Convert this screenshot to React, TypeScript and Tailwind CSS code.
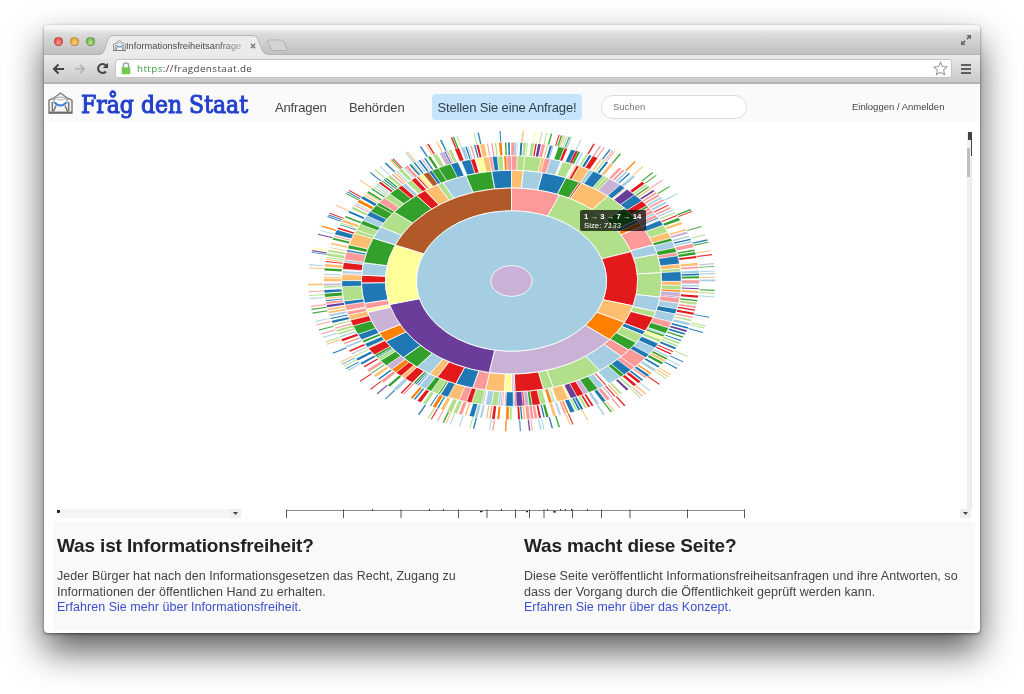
import React from "react";

const COLORS: Record<string, string> = {
  a: "#a6cee3",
  B: "#1f78b4",
  g: "#b2df8a",
  G: "#33a02c",
  p: "#fb9a99",
  R: "#e31a1c",
  o: "#fdbf6f",
  O: "#ff7f00",
  l: "#cab2d6",
  V: "#6a3d9a",
  y: "#ffff99",
  n: "#b15928",
  w: "#ffffff",
};

// Ring radii; the drawing is squashed vertically by SQUASH.
const RADII = [61, 285, 378, 450, 509, 563, 611];
const SQUASH = 0.738;

// Full rings: "colour end-angle", clockwise from the top.
const RING_2 = "p22.4 g71.6 R105.5 o116.4 O129 l190.2 V255.4 y292.8 n360";
const RING_3 =
  "o4.5 a12 B21.3 G27 R27.8 o39.9 g48.7 G56.5 B58 O60.3 p71 a76 g85.7 g98.4 a106 g109.1 R116.9 B119.2 g123.8 G128.6 p132.9 a144 g163.8 g167.7 R178.7 V179.3 l180 y182.8 o190 p195 B201.8 R209.7 o213 a219 G226.2 B236.9 O242.1 l253.6 y255.3 p258.4 B269 R273 a279.5 G292.8 a299.4 g308.5 G320.7 R324.9 o330.4 g332.8 a342.3 G352.4 B360";
const RING_4 =
  "p2 g4.5 g10.2 o11.3 p13.3 a17 w17.6 g21.1 w22 o22.6 R23.6 o27.3 a28.8 B32.7 g33.9 g35.2 l39.8 B42 o42.5 w42.9 V46.5 B50.3 R53 G54 p55.5 p57 a58 p59.5 B60.2 w61 B63.5 g67.1 o70 G71.5 a74.6 G76.8 p78.4 B82.2 o84.2 g85.7 B90.2 o92.1 g94.2 O95.2 l97.3 V97.8 p100.2 a102.9 B105.3 a109.2 p112 G114.8 a115.6 G116.6 y118 g119.5 w120 B122.4 a125.8 B127.8 p133.4 p135.2 B138.4 G140 a145 w146 R146.6 w147 a149.4 G153 l154.8 R157.3 V159.6 y160.4 o164.4 w165 g165.6 a166.1 O167.3 w168.2 g170.2 R173 G174 l175.5 R176.1 V178.4 R178.8 a179.4 B182 p182.5 w182.9 R183.2 l183.8 a184.6 g186.8 a189 w189.5 l190.1 g193.6 R195.4 p198 o202 B204.8 w205 G205.7 g208.3 G210.3 a213 w213.3 B213.8 w214 B214.6 G215.4 w215.7 R219 o220.6 R223 O225 l227.5 G230.6 g232.2 B232.8 G233.9 R237.5 o238 B240 w240.5 G241.7 w242 B244.8 G249 R251.8 o254.2 p256 w256.4 p259 B260.8 g267.4 B270.2 o273 p273.6 a274.8 w275.4 R278.6 a279.8 p283.6 B284.6 w285 G286.8 o292.4 g294 g297 G299 a301.5 B303.8 G307.4 G308.8 p311.6 g314.2 G318 R319.8 a321.4 w321.8 g323.8 R325.6 w326 R326.6 o327.2 y328.6 n330.8 B332 G334.5 G339 B341.7 w342.8 B346 R347.6 w348 y350.3 o352.4 p353.5 B355.2 g357.1 w357.4 O358.4 p360";

// Sparse outer rings: "x,y,colour,width" of the outer end of each wedge, by quadrant.
type Quad = { ox: number; oy: number; marks: string };
const RING_5: Quad[] = [
  { ox: 634.5, oy: 468, marks: "627,55,B,5 617,55,G,4 601,55,O,8 587,57,g,4 576,57,p,4 563,59,p,3 547,60,o,13 533,62,R,6 525,64,B,4 514,65,p,4 505,67,a,3 499,68,B,4 489,70,a,10 472,74,R,12 452,80,g,9 443,82,p,3 437,84,B,3 428,87,l,14 408,94,g,12 390,99,G,7 378,105,B,4 370,108,l,3 363,112,B,5 355,115,a,3 348,119,B,4 340,121,g,3 335,124,B,5 325,130,p,8 318,135,a,3 307,140,g,9 298,146,a,3 290,148,o,4 283,153,p,4 273,158,g,7 262,163,G,4 256,166,B,3 250,170,G,3 243,175,R,6 236,180,a,3 230,184,g,3 224,188,a,3 218,193,G,4 208,203,G,5 202,206,o,3 196,211,o,4 190,219,B,8 180,230,O,8 172,238,a,3 166,242,p,3 160,250,g,7 151,262,B,6 139,276,G,5 131,288,o,8 127,296,g,3 123,300,B,2 118,311,R,5 110,322,B,14 105,334,p,3 103,342,G,6 95,356,o,5 90,368,o,2 88,378,g,6 85,389,g,8 83,398,g,3 80,404,o,3 79,410,R,3 77,421,o,8 75,433,G,7 73,448,a,3 72,456,o,3 71,464,o,7" },
  { ox: 634.5, oy: 3, marks: "72,2,o,4 73,14,l,5 73,21,g,4 75,34,B,8 77,46,G,10 78,55,o,3 79,62,B,3 80,69,p,6 82,78,V,7 86,88,o,5 87,97,o,6 90,106,a,6 95,115,B,3 99,125,B,7 102,135,g,4 108,144,p,4 112,152,g,6 117,161,g,5 121,170,a,4 127,180,R,7 135,190,p,5 142,199,a,6 150,213,R,5 158,220,l,3 165,228,g,3 173,238,B,7 186,250,B,6 197,258,R,4 208,270,p,8 217,278,G,3 225,288,o,8 237,297,B,4 248,304,p,9 266,318,G,7 283,331,a,9 303,340,R,4 310,343,p,4 336,354,O,6 345,357,B,4 358,364,R,10 373,372,g,9 392,377,B,3 403,381,O,9 414,384,B,4 427,390,o,9 448,395,g,12 466,399,g,10 482,401,p,10 497,404,o,4 515,409,B,13 529,411,a,8 543,413,a,6 560,414,o,4 570,415,p,4 580,417,R,8 595,417,O,6 622,418,O,8 632,418,g,6" },
  { ox: 4.5, oy: 3, marks: "27,417,R,6 35,417,B,4 43,416,o,5 55,416,p,10 67,415,p,8 78,414,p,8 90,413,R,6 102,411,B,4 112,410,G,7 133,404,o,8 150,402,a,5 165,400,p,5 173,398,O,4 187,395,B,12 200,392,g,5 207,388,B,5 215,385,B,6 228,384,g,6 237,380,R,5 247,376,R,5 262,370,a,8 280,361,B,9 293,356,p,9 305,350,l,4 312,346,R,3 322,343,o,4 330,338,g,5 350,327,V,6 360,320,g,5 372,313,R,8 385,304,R,8 394,298,B,5 403,290,p,5 411,285,B,7 420,279,O,4 433,270,a,8 446,260,B,5 456,250,G,7 463,242,o,6 469,236,G,5 475,230,a,4 481,221,R,4 486,214,R,3 493,204,B,6 498,196,g,4 503,188,g,5 508,180,B,3 515,170,G,4 520,161,B,5 525,152,V,6 530,143,B,5 535,132,a,8 541,121,g,5 546,112,p,4 550,101,R,7 553,90,R,4 556,81,p,5 560,71,g,7 562,62,G,4 563,50,R,7 565,36,o,6 566,26,V,3 566,18,a,4 567,7,l,8" },
  { ox: 4.5, oy: 468, marks: "566,469,p,7 566,457,G,6 566,448,B,5 565,440,a,7 564,427,p,5 563,417,o,7 558,396,R,6 556,385,G,8 553,376,G,5 548,362,p,11 545,350,a,5 541,343,B,4 535,335,a,4 528,324,l,7 524,315,o,5 512,295,o,7 505,283,G,8 499,272,R,3 492,264,g,4 486,256,a,4 480,249,p,5 474,241,R,3 465,234,a,6 458,226,p,5 452,219,a,5 444,212,p,6 437,205,p,5 430,198,V,5 422,191,o,4 415,186,G,4 409,180,g,5 399,174,R,9 370,155,a,8 357,146,B,4 349,141,a,5 340,136,p,5 330,130,p,7 303,120,o,8 290,113,B,6 281,109,g,4 272,105,o,4 255,97,R,14 240,93,B,7 230,90,g,5 215,88,a,4 205,85,G,6 198,83,R,6 188,79,B,12 167,73,R,7 153,70,G,16 128,66,a,4 122,65,B,6 112,63,o,3 100,61,p,9 88,60,V,8 78,58,R,4 68,57,g,9 52,56,g,3 44,56,g,8 34,55,B,6 22,55,a,2 16,55,a,6 8,55,p,9" },
];
const RING_6: Quad[] = [
  { ox: 634.5, oy: 468, marks: "600,18,B,3 535,25,B,4 523,27,g,3 472,36,g,3 461,38,G,4 455,39,R,4 423,47,B,4 411,51,o,3 384,57,R,4 378,60,o,3 363,67,B,4 325,84,o,3 320,86,a,3 282,104,R,3 277,106,G,3 273,108,o,3 257,115,B,4 242,126,a,3 226,135,g,3 212,144,B,3 182,167,o,3 147,196,R,3 143,201,B,3 140,206,G,3 108,241,o,3 90,265,R,3 86,270,B,3 84,275,B,3 67,304,O,4 63,317,a,2 55,328,V,3 42,370,y,3 37,377,V,3 36,382,B,2 28,419,a,3 26,428,o,3 25,478,o,3" },
  { ox: 634.5, oy: 3, marks: "25,15,o,3 27,35,p,3 28,47,g,3 30,56,a,3 33,79,p,3 35,88,G,3 40,99,G,3 47,124,a,3 55,133,p,3 57,150,G,3 63,162,p,3 70,172,a,3 77,186,g,3 82,192,o,3 100,219,B,3 122,246,o,3 128,252,B,2 133,258,g,3 140,265,B,3 145,271,a,4 180,304,R,3 212,328,R,3 232,341,V,3 257,356,B,3 356,404,B,4 385,415,g,4 395,416,R,3 412,424,p,3 430,428,G,4 438,430,o,3 450,433,a,3 478,438,a,3 510,443,g,3 521,445,B,4 569,451,a,3 579,452,p,4 617,453,O,4" },
  { ox: 4.5, oy: 3, marks: "31,453,B,3 59,452,V,4 67,451,p,3 92,448,a,4 101,446,a,3 127,445,B,4 148,442,G,4 181,436,o,3 189,433,R,3 233,421,o,3 282,404,a,4 303,395,G,4 311,392,o,3 330,384,p,4 344,377,R,4 390,352,g,3 396,347,p,3 406,341,o,4 419,332,a,3 448,313,R,3 468,295,g,3 475,290,o,3 480,283,o,3 500,265,B,3 508,256,a,3 518,245,B,3 533,229,g,3 578,157,B,3 585,145,g,3 586,138,g,3 597,112,B,3 611,51,a,3 613,40,g,3 613,31,G,3 614,2,a,4" },
  { ox: 4.5, oy: 468, marks: "614,465,a,3 614,457,o,3 613,446,a,4 613,438,a,3 611,424,G,2 610,416,l,3 605,389,R,3 603,377,o,3 595,352,G,3 592,345,B,4 583,330,g,3 573,305,G,3 544,260,R,3 541,254,G,4 500,207,a,3 478,185,G,3 455,167,p,3 437,152,G,3 427,144,G,3 398,125,o,3 374,111,O,4 330,88,G,4 313,80,p,3 308,77,p,3 298,76,B,4 282,68,p,3 270,64,p,4 252,57,R,4 212,46,a,3 182,40,a,4 177,38,G,3 171,36,a,3 164,36,g,3 159,34,o,3 154,33,G,4 147,31,R,3 124,28,G,4 110,25,g,3 95,24,g,3 76,22,y,4 39,18,o,4" },
];

function wedge(r0: number, r1: number, a0: number, a1: number) {
  const pt = (r: number, deg: number) => {
    const t = (deg * Math.PI) / 180;
    return `${(r * Math.sin(t)).toFixed(2)} ${(-r * Math.cos(t) * SQUASH).toFixed(2)}`;
  };
  const big = a1 - a0 > 180 ? 1 : 0;
  return `M${pt(r0, a0)}L${pt(r1, a0)}A${r1} ${r1 * SQUASH} 0 ${big} 1 ${pt(r1, a1)}L${pt(r0, a1)}A${r0} ${r0 * SQUASH} 0 ${big} 0 ${pt(r0, a0)}Z`;
}

function FullRing({ data, level }: { data: string; level: number }) {
  let start = 0;
  return (
    <g stroke="#fff" strokeWidth={level > 3 ? 1.6 : 2.6}>
      {data.split(" ").map((tok, i) => {
        const end = parseFloat(tok.slice(1));
        const d = wedge(RADII[level - 1], RADII[level], start, end);
        start = end;
        return <path key={i} d={d} fill={COLORS[tok[0]]} />;
      })}
    </g>
  );
}

function SparseRing({ quads, level }: { quads: Quad[]; level: number }) {
  return (
    <g>
      {quads.flatMap((q, qi) =>
        q.marks.split(" ").map((m, i) => {
          const [x, y, c, w] = m.split(",");
          const t = Math.atan2(+x - q.ox, -(+y - q.oy) / SQUASH);
          const deg = (t * 180) / Math.PI;
          const half = (+w * (0.1 + 0.037 * Math.abs(Math.sin(t)))) / 2;
          return (
            <path
              key={`${qi}-${i}`}
              d={wedge(RADII[level - 1] + 2, RADII[level], deg - half, deg + half)}
              fill={COLORS[c]}
              opacity={level === 6 ? 0.9 : 1}
            />
          );
        }),
      )}
    </g>
  );
}

function Sunburst() {
  return (
    <svg width="905" height="387" viewBox="0 0 905 387" className="block shrink-0">
      <g transform="translate(456.5 159) scale(0.33333)">
        <SparseRing quads={RING_6} level={6} />
        <SparseRing quads={RING_5} level={5} />
        <FullRing data={RING_4} level={4} />
        <FullRing data={RING_3} level={3} />
        <FullRing data={RING_2} level={2} />
        <ellipse rx="285" ry="210.5" fill="#a6cee3" stroke="#fff" strokeWidth="2.6" />
        <ellipse rx="62" ry="46" fill="#cab2d6" stroke="#fff" strokeWidth="2.6" />
      </g>
    </svg>
  );
}

const TICKS = [0.5, 57.5, 115, 172.5, 201, 229.5, 243.5, 258, 286.5, 315.5, 344, 401.5, 458.5];
const DOTS = [86, 143, 157, 215, 261, 274, 279, 285, 301];

function Axis() {
  return (
    <svg width="460" height="9" viewBox="0 0 460 9" className="block shrink-0">
      <path d="M0 1.5H459" stroke="#888" strokeWidth="1" />
      {TICKS.map((x) => (
        <path key={x} d={`M${x} 0.5V9`} stroke="#444" strokeWidth="0.9" />
      ))}
      {DOTS.map((x) => (
        <rect key={x} x={x} y="0" width="1" height="1.5" fill="#333" />
      ))}
      <rect x="194" y="2" width="2.5" height="1.2" fill="#222" />
      <rect x="240" y="2" width="2" height="1.2" fill="#222" />
      <rect x="267" y="2.2" width="3" height="1.3" fill="#222" />
    </svg>
  );
}

function EnvelopeHouse({ size }: { size: number }) {
  return (
    <svg width={size} height={size * 0.88} viewBox="0 0 25 22" fill="none" className="block shrink-0">
      <path d="M1 8.200 5 6.500 12.500 1 20 6.500 24 8.200V21H1Z" fill="#f4f4f4" stroke="#7a7a7a" strokeWidth="1.400" />
      <path d="M6 11V7.500Q12.500 2.500 19 7.500V11" fill="#fff" stroke="#999" strokeWidth="1.200" />
      <path d="M9 7.800h7" stroke="#aaa" strokeWidth="1" />
      <path d="M4.300 10v9.500M8 13.500 5.500 19.500M17 13.500l2.500 6M20.700 10v9.500" stroke="#777" strokeWidth="1.500" />
      <path d="M1 20.500h23" stroke="#6a6a6a" strokeWidth="1.800" />
      <path d="M6.500 10.500Q12.500 16.500 18.500 10.500" stroke="#3d7fdc" strokeWidth="2" />
    </svg>
  );
}

function Light({ className }: { className: string }) {
  return <span className={"size-[9px] rounded-full border border-black/20 " + className} />;
}

function TitleBar() {
  return (
    <div className="flex h-[30px] shrink-0 items-end rounded-t-[4px] border-b border-[#b4b4b4] bg-linear-to-b from-[#f6f6f6] from-10% via-[#dcdcdc] via-30% to-[#c0c0c0]">
      <div className="flex h-[30px] w-[56px] items-center gap-[7px] pl-[10px] pt-[4px] blur-[0.3px]">
        <Light className="bg-radial-[at_50%_70%] from-[#ff9a90] to-[#d8382f]" />
        <Light className="bg-radial-[at_50%_70%] from-[#ffd878] to-[#dd9420]" />
        <Light className="bg-radial-[at_50%_70%] from-[#b8e892] to-[#62a83c]" />
      </div>
      <div className="relative h-[19px] w-[168px] shrink-0">
        <svg width="168" height="20" viewBox="0 0 168 20" className="absolute left-0 top-0">
          <path d="M0 19.500Q3 19 4.500 15L8 4Q9.500.5 13 .5H153Q156.500.5 158 4L162 15Q163.500 19 168 19.500V20H0Z" fill="#ebebeb" />
          <path d="M0 19.500Q3 19 4.500 15L8 4Q9.500.5 13 .5H153Q156.500.5 158 4L162 15Q163.500 19 168 19.500" fill="none" stroke="#a9a9a9" strokeWidth=".8" />
        </svg>
        <div className="relative flex h-full items-center pl-[13px] pt-[2px] blur-[0.3px]">
          <EnvelopeHouse size={13} />
          <span className="w-[120px] overflow-hidden whitespace-nowrap bg-linear-to-r from-[#444] from-75% to-[#bbb] bg-clip-text text-[9.300px] leading-[14px] text-transparent">
            Informationsfreiheitsanfrage
          </span>
          <svg width="6" height="6" viewBox="0 0 6 6" className="ml-[4px]">
            <path d="M.8.8l4.400 4.400M5.200.8.8 5.200" stroke="#777" strokeWidth="1.300" />
          </svg>
        </div>
      </div>
      <svg width="23" height="16" viewBox="0 0 23 16" className="mb-[1px] ml-[-2px] shrink-0">
        <path d="M3 3H15Q17 3 18 5l3 6.500q.5 2-1.500 2H8Q6 13.500 5 11.500L1.500 5Q1 3 3 3Z" fill="#d3d3d3" stroke="#b2b2b2" />
      </svg>
      <svg width="12" height="12" viewBox="0 0 12 12" className="mb-[8px] ml-auto mr-[8px] blur-[0.3px]">
        <path d="M6.500 1H11v4.500L9.300 3.900 7.400 5.800 6.200 4.600 8.100 2.700ZM5.500 11H1V6.500l1.700 1.600 1.900-1.900 1.200 1.200-1.900 1.900Z" fill="#6c6c6c" />
      </svg>
    </div>
  );
}

function Toolbar() {
  return (
    <div className="flex h-[29px] shrink-0 items-center border-b-2 border-[#b5b5b5] bg-linear-to-b from-[#ebebeb] to-[#c9c9c9] pl-[8px] pr-[9px]">
      <svg width="13" height="12" viewBox="0 0 13 12" fill="none" className="blur-[0.3px]">
        <path d="M12 6H2.500M6.500 1.500 2 6l4.500 4.500" stroke="#444" strokeWidth="2" />
      </svg>
      <svg width="12" height="12" viewBox="0 0 13 12" fill="none" className="ml-[9px] blur-[0.3px]">
        <path d="M1 6h9.500M6.500 1.500 11 6l-4.500 4.500" stroke="#b2b2b2" strokeWidth="1.800" />
      </svg>
      <svg width="13" height="13" viewBox="0 0 13 13" fill="none" className="ml-[10px] blur-[0.3px]">
        <path d="M10 9.500A4.500 4.500 0 1 1 9.800 3.300" stroke="#444" strokeWidth="2" />
        <path d="M12 .8V6H6.800Z" fill="#444" />
      </svg>
      <div className="ml-[6px] flex h-[19px] flex-1 items-center rounded-[3px] border border-[#c4c4c4] bg-white pl-[5px] pr-[3px]">
        <svg width="10" height="13" viewBox="0 0 10 13" fill="none" className="blur-[0.3px]">
          <path d="M2.300 6V3.800a2.700 2.700 0 0 1 5.400 0V6" stroke="#9aa79a" strokeWidth="1.500" />
          <rect x=".7" y="5.300" width="8.600" height="6.900" rx="1" fill="#74c84d" />
        </svg>
        <span className="ml-[6px] font-['Open_Sans','DejaVu_Sans',sans-serif] text-[9.800px] leading-[14px] tracking-[0.42px] text-[#444] blur-[0.3px]">
          <span className="text-[#3fa048]">https</span>://fragdenstaat.de
        </span>
        <svg width="15" height="15" viewBox="0 0 15 15" fill="#fff" className="ml-auto blur-[0.3px]">
          <path d="M7.500 1.200 9.400 5.500l4.600.5-3.400 3.100 1 4.500-4.100-2.300-4.100 2.300 1-4.500L1 6l4.600-.5Z" stroke="#a0a0a0" strokeWidth="1.100" />
        </svg>
      </div>
      <div className="ml-[9px] flex w-[10px] flex-col gap-[2px]">
        <span className="h-[2px] bg-[#606060]" />
        <span className="h-[2px] bg-[#606060]" />
        <span className="h-[2px] bg-[#606060]" />
      </div>
    </div>
  );
}

function SiteHeader() {
  return (
    <header className="flex h-[38px] shrink-0 items-center bg-[#fafafa] pl-[4px] pt-[8px] text-[13px] text-[#444]">
      <div className="mb-[8px] blur-[0.3px]">
        <EnvelopeHouse size={25} />
      </div>
      <svg width="176" height="34" viewBox="0 0 176 34" className="mb-[6px] ml-[4px] shrink-0 overflow-visible blur-[0.3px]">
        <text x="4" y="25.500" textLength="167" lengthAdjust="spacingAndGlyphs" fill="#2341cd" stroke="#2341cd" strokeWidth="1.100" fontSize="25" fontFamily="'DejaVu Serif',serif">
          Fråg den Staat
        </text>
      </svg>
      <nav className="ml-[22px] flex items-center whitespace-nowrap leading-[16px] blur-[0.3px]">
        <span className="w-[74px] pt-px tracking-[-0.15px]">Anfragen</span>
        <span className="w-[83px] pt-px tracking-[-0.1px]">Behörden</span>
        <span className="flex h-[26px] w-[150px] items-center justify-center rounded-[4px] bg-[#c5e5fc] pt-px tracking-[-0.13px] text-[#35404a]">
          Stellen Sie eine Anfrage!
        </span>
      </nav>
      <div className="ml-[19px] flex h-[24px] w-[146px] items-center rounded-full border border-[#dcdcdc] bg-white pl-[11px] text-[9.500px] text-[#777] blur-[0.3px]">
        Suchen
      </div>
      <span className="ml-[105px] whitespace-nowrap text-[9.500px] blur-[0.3px]">Einloggen / Anmelden</span>
    </header>
  );
}

function Arrow() {
  return (
    <span className="flex h-[9px] w-[11px] items-center justify-center bg-[#eeeeee]">
      <svg width="5" height="3" viewBox="0 0 5 3">
        <path d="M0 0h5L2.500 3Z" fill="#444" />
      </svg>
    </span>
  );
}

function Tooltip() {
  return (
    <div className="absolute left-[525px] top-[88px] h-[21px] w-[66px] rounded-[2px] bg-black/70 pl-[4px] pt-[2px] text-white">
      <div className="w-[46px] origin-left scale-x-[1.1] whitespace-nowrap text-[7px] font-bold leading-[9px]">
        1 → 3 → 7 → 14
      </div>
      <div className="w-[46px] origin-left scale-x-[1.2] whitespace-nowrap text-[6.500px] leading-[9px]">
        Size: <i>7133</i>
      </div>
    </div>
  );
}

function ChartPanel() {
  return (
    <section className="relative flex h-[400px] shrink-0 flex-col bg-white pl-[11px]">
      <div className="flex h-[387px]">
        <Sunburst />
        <div className="ml-[7px] mt-[10px] flex h-[377px] w-[5px]">
          <div className="flex w-[4px] flex-col bg-[#f0f0f0]">
            <span className="ml-px h-[8px] bg-[#444]" />
            <span className="mt-[8px] h-[29px] w-[3px] bg-[#bebebe]" />
          </div>
          <div className="flex w-px flex-col bg-[#e2e8ee]">
            <span className="h-[24px] bg-[#444]" />
          </div>
        </div>
      </div>
      <div className="flex h-[9px]">
        <span className="ml-[2px] mt-px size-[3px] border-l-2 border-t-2 border-[#222] bg-[#c44]" />
        <div className="flex w-[181px] justify-end bg-[#f5f5f5]">
          <Arrow />
        </div>
        <div className="ml-[45px]">
          <Axis />
        </div>
        <div className="ml-[214px]">
          <Arrow />
        </div>
      </div>
      <div className="absolute left-0 top-0">
        <div className="relative left-[11px]">
          <Tooltip />
        </div>
      </div>
    </section>
  );
}

function InfoColumn({ title, lines, link, className }: { title: string; lines: string[]; link: string; className: string }) {
  return (
    <div className={className}>
      <h2 className="text-[19px] font-bold leading-[24px] tracking-[-0.15px] text-[#222]">{title}</h2>
      <p className="mt-[11px] whitespace-nowrap text-[12.500px] leading-[15.700px] tracking-[0.03px] text-[#444]">
        {lines.map((l) => (
          <span key={l} className="block">
            {l}
          </span>
        ))}
        <span className="block text-[#3a50cc]">{link}</span>
      </p>
    </div>
  );
}

export default function App() {
  return (
    <div className="h-[694px] w-[1024px] overflow-hidden bg-white pl-[44px] pt-[25px] font-['Liberation_Sans',Arial,sans-serif]">
      <div className="flex h-[608px] w-[936px] flex-col rounded-[4px] bg-white shadow-[0_1px_3px_rgba(0,0,0,0.5),0_18px_36px_rgba(0,0,0,0.65)]">
        <TitleBar />
        <Toolbar />
        <SiteHeader />
        <ChartPanel />
        <footer className="ml-[9px] mr-[5px] flex h-[108px] bg-[#f9f9f9] pl-[4px] pt-[12px] blur-[0.3px]">
          <InfoColumn
            className="w-[467px] shrink-0"
            title="Was ist Informationsfreiheit?"
            lines={["Jeder Bürger hat nach den Informationsgesetzen das Recht, Zugang zu", "Informationen der öffentlichen Hand zu erhalten."]}
            link="Erfahren Sie mehr über Informationsfreiheit."
          />
          <InfoColumn
            className="shrink-0"
            title="Was macht diese Seite?"
            lines={["Diese Seite veröffentlicht Informationsfreiheitsanfragen und ihre Antworten, so", "dass der Vorgang durch die Öffentlichkeit geprüft werden kann."]}
            link="Erfahren Sie mehr über das Konzept."
          />
        </footer>
      </div>
    </div>
  );
}
